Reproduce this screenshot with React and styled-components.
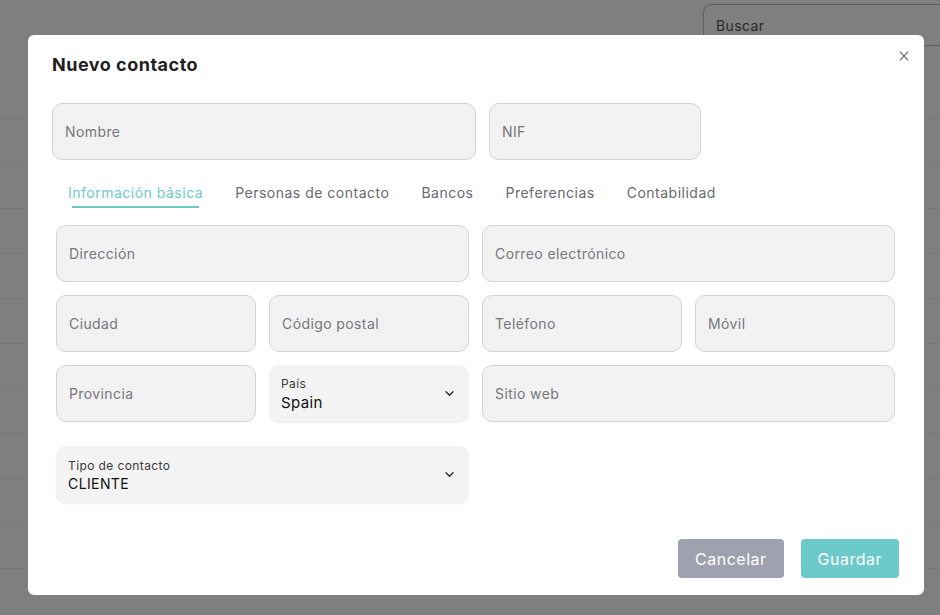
import React from "react";
import styled, { createGlobalStyle } from "styled-components";

const GlobalStyle = createGlobalStyle`
  html, body {
    margin: 0;
    padding: 0;
    height: 100%;
    background: #fff;
    font-family: Inter, "Open Sans", sans-serif;
    letter-spacing: 0.4px;
    overflow: hidden;
  }
`;

const Page = styled.div`
  position: relative;
  width: 940px;
  height: 615px;
  overflow: hidden;
  background: #fff;
`;

const Header = styled.div`
  display: flex;
  justify-content: flex-end;
  padding-top: 4px;
  height: 74px;
  box-sizing: border-box;
`;

const SearchBox = styled.div`
  width: 260px;
  height: 42px;
  margin-right: -23px;
  box-sizing: border-box;
  border: 1px solid #bbb;
  border-radius: 8px;
  display: flex;
  align-items: center;
  padding-left: 12px;
  font-size: 14px;
  color: #555;
`;

const TableRow = styled.div`
  height: 45px;
  border-bottom: 1px solid #eee;
  box-sizing: border-box;
  display: flex;
  align-items: center;
  padding-left: 135px;
  padding-top: 4px;
  font-size: 14px;
  color: #222;
`;

const Overlay = styled.div`
  position: absolute;
  inset: 0;
  background: rgba(0, 0, 0, 0.5);
  display: flex;
  align-items: flex-start;
  padding: 35px 16px 0 28px;
  box-sizing: border-box;
`;

const Modal = styled.div`
  position: relative;
  width: 896px;
  height: 560px;
  background: #fff;
  border-radius: 6px;
  box-sizing: border-box;
  padding: 20px 24px 0 24px;
  display: flex;
  flex-direction: column;
`;

const Title = styled.h2`
  margin: 0;
  font-size: 18px;
  font-weight: 700;
  color: #1f1f24;
  line-height: 20px;
  letter-spacing: 0.5px;
`;

const CloseButton = styled.button`
  position: absolute;
  top: 13px;
  right: 12px;
  width: 16px;
  height: 16px;
  border: none;
  background: none;
  padding: 0;
  display: flex;
  align-items: center;
  justify-content: center;
`;

const TopRow = styled.div`
  display: flex;
  gap: 13px;
  margin-top: 28px;
`;

const Input = styled.div`
  box-sizing: border-box;
  height: 57px;
  width: ${(p) => p.$w || "auto"};
  background: #f2f2f2;
  border: 1px solid #d2d2da;
  border-radius: 10px;
  display: flex;
  align-items: center;
  padding-left: 12px;
  font-size: 14px;
  color: #76767c;
  grid-column: span ${(p) => p.$span || 1};
`;

const Tabs = styled.div`
  display: flex;
  gap: 32px;
  padding-left: 16px;
  margin-top: 24px;
`;

const Tab = styled.div`
  position: relative;
  font-size: 14px;
  letter-spacing: 0.5px;
  color: ${(p) => (p.$active ? "#6ccacb" : "#68686f")};
  padding-bottom: 7px;
  &::after {
    content: "";
    display: ${(p) => (p.$active ? "block" : "none")};
    position: absolute;
    left: 4px;
    right: 4px;
    bottom: 0;
    height: 2px;
    background: #6ccacb;
  }
`;

const Grid = styled.div`
  display: grid;
  grid-template-columns: repeat(4, 1fr);
  gap: 13px;
  margin: 17px 5px 0 4px;
`;

const Select = styled.div`
  box-sizing: border-box;
  height: 57px;
  background: #f3f3f3;
  border-radius: 10px;
  box-shadow: 0 1px 2px rgba(0, 0, 0, 0.08);
  display: flex;
  align-items: center;
  justify-content: space-between;
  padding: 0 15px 0 12px;
  grid-column: span ${(p) => p.$span || 1};
  margin-top: ${(p) => p.$mt || 0}px;
`;

const SelectText = styled.div`
  display: flex;
  flex-direction: column;
  gap: 2px;
`;

const SelectLabel = styled.span`
  font-size: 12px;
  color: #3a3a40;
`;

const SelectValue = styled.span`
  font-size: ${(p) => p.$size || 15}px;
  color: #111;
`;

const Footer = styled.div`
  margin-top: auto;
  margin-bottom: 17px;
  display: flex;
  justify-content: flex-end;
  gap: 17px;
  padding-right: 1px;
`;

const Button = styled.button`
  height: 39px;
  padding: 0 ${(p) => p.$px}px;
  border: none;
  border-radius: 4px;
  background: ${(p) => p.$bg};
  color: #fff;
  font-family: inherit;
  letter-spacing: 0.5px;
  font-size: 16px;
`;

const Chevron = () => (
  <svg width="9" height="5" viewBox="0 0 9 5" fill="none">
    <path d="M1 0.8l3.5 3.4 3.5-3.4" stroke="#222" strokeWidth="1.3" strokeLinecap="round" strokeLinejoin="round" />
  </svg>
);

const rows = ["", "", "", "", "", "", "", "", "", "", "CLIENTE"];

export default function App() {
  return (
    <Page>
      <GlobalStyle />
      <Header>
        <SearchBox>Buscar</SearchBox>
      </Header>
      {rows.map((r, i) => (
        <TableRow key={i}>{r}</TableRow>
      ))}
      <Overlay>
        <Modal>
          <CloseButton aria-label="Cerrar">
            <svg width="10" height="10" viewBox="0 0 10 10">
              <path d="M1 1l8 8M9 1l-8 8" stroke="#777" strokeWidth="1.3" />
            </svg>
          </CloseButton>
          <Title>Nuevo contacto</Title>
          <TopRow>
            <Input $w="424px">Nombre</Input>
            <Input $w="212px">NIF</Input>
          </TopRow>
          <Tabs>
            <Tab $active>Información básica</Tab>
            <Tab>Personas de contacto</Tab>
            <Tab>Bancos</Tab>
            <Tab>Preferencias</Tab>
            <Tab>Contabilidad</Tab>
          </Tabs>
          <Grid>
            <Input $span={2}>Dirección</Input>
            <Input $span={2}>Correo electrónico</Input>
            <Input>Ciudad</Input>
            <Input>Código postal</Input>
            <Input>Teléfono</Input>
            <Input>Móvil</Input>
            <Input>Provincia</Input>
            <Select>
              <SelectText>
                <SelectLabel>País</SelectLabel>
                <SelectValue>Spain</SelectValue>
              </SelectText>
              <Chevron />
            </Select>
            <Input $span={2}>Sitio web</Input>
            <Select $span={2} $mt={11}>
              <SelectText>
                <SelectLabel>Tipo de contacto</SelectLabel>
                <SelectValue $size={14}>CLIENTE</SelectValue>
              </SelectText>
              <Chevron />
            </Select>
          </Grid>
          <Footer>
            <Button $bg="#9fa2ae" $px={17}>Cancelar</Button>
            <Button $bg="#6ccacb" $px={17}>Guardar</Button>
          </Footer>
        </Modal>
      </Overlay>
    </Page>
  );
}
